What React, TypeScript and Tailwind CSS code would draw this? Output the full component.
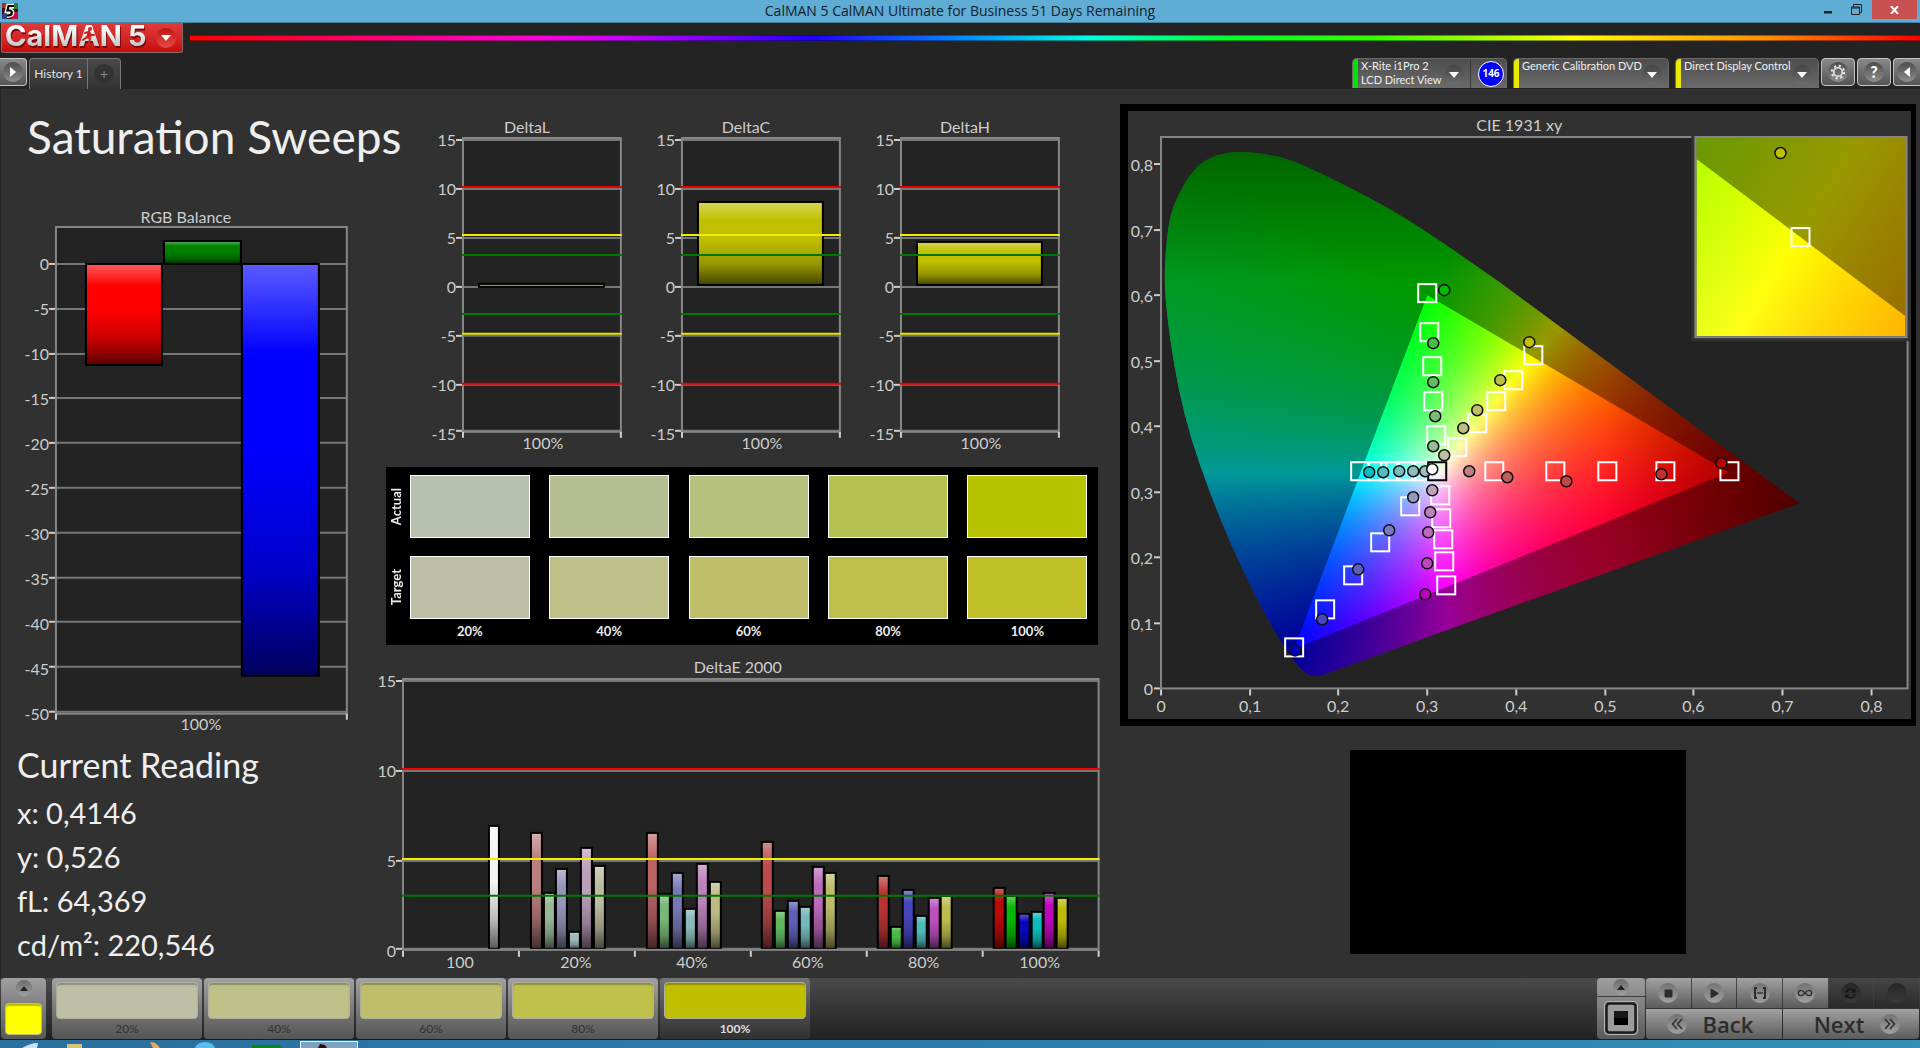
import React from "react";
import { FaPlay, FaStop, FaSyncAlt } from "react-icons/fa";
import { Infinity as InfinityIcon } from "lucide-react";

// ---------------------------------------------------------------- shared bits

const SharedDefs = () => (
  <svg className="absolute h-0 w-0" aria-hidden="true">
    <defs>
      <linearGradient id="barShade" x1="0" y1="0" x2="0" y2="1">
        <stop offset="0" stopColor="#fff" stopOpacity="0.36" />
        <stop offset="0.22" stopColor="#fff" stopOpacity="0" />
        <stop offset="0.45" stopColor="#000" stopOpacity="0" />
        <stop offset="0.75" stopColor="#000" stopOpacity="0.22" />
        <stop offset="1" stopColor="#000" stopOpacity="0.64" />
      </linearGradient>
    </defs>
  </svg>
);

interface IBar {
  x: number;
  y: number;
  w: number;
  h: number;
  color: string;
}

const Bar = ({ x, y, w, h, color }: IBar) => (
  <g>
    <rect x={x} y={y} width={w} height={h} fill={color} />
    <rect x={x} y={y} width={w} height={h} fill="url(#barShade)" stroke="#000" strokeWidth={2} />
  </g>
);

interface IText {
  x: number;
  y: number;
  anchor?: "start" | "middle" | "end";
  children: React.ReactNode;
}

const ChartText = ({ x, y, anchor = "middle", children }: IText) => (
  <text x={x} y={y + 6} textAnchor={anchor} fontSize={16} fill="#cdcdcd">
    {children}
  </text>
);

const Line = ({ x1, x2, y, color = "#767676", w = 2 }: { x1: number; x2: number; y: number; color?: string; w?: number }) => (
  <line x1={x1} x2={x2} y1={y} y2={y} stroke={color} strokeWidth={w} />
);

const Tick = ({ x, y }: { x: number; y: number }) => (
  <line x1={x} x2={x} y1={y} y2={y + 6} stroke="#cdcdcd" strokeWidth={2} />
);

// --------------------------------------------------------------------- charts

const RgbBalance = () => (
  <svg viewBox="0 0 374 534" className="block w-full" role="img" aria-label="RGB Balance">
    <ChartText x={185} y={11}>RGB Balance</ChartText>
    <rect x={55} y={21} width={291} height={487} fill="#232323" />
    {Array.from({ length: 11 }, (_, i) => (
      <g key={i}>
        <Line x1={55} x2={346} y={58 + i * 45 - Math.round(i / 5)} />
        <Line x1={48} x2={54} y={58 + i * 45 - Math.round(i / 5)} color="#cdcdcd" />
        <ChartText x={48} y={58 + i * 45} anchor="end">{i * -5}</ChartText>
      </g>
    ))}
    <rect x={55} y={21} width={291} height={487} fill="none" stroke="#868686" strokeWidth={2} />
    <Bar x={85} y={58} w={76} h={101} color="#ff0000" />
    <Bar x={163} y={35} w={77} h={23} color="#008200" />
    <Bar x={241} y={58} w={77} h={412} color="#0000ff" />
    <Tick x={55} y={508} />
    <Tick x={346} y={508} />
    <ChartText x={200} y={518}>100%</ChartText>
  </svg>
);

interface IDelta {
  title: string;
  top: number;
  height: number;
}

const DeltaChart = ({ title, top, height }: IDelta) => (
  <svg viewBox="0 0 219 340" className="block min-w-0 flex-1" role="img" aria-label={title}>
    <ChartText x={116} y={9}>{title}</ChartText>
    <rect x={52} y={20} width={158} height={294} fill="#232323" />
    {[15, 10, 5, 0, -5, -10, -15].map((v, i) => (
      <g key={v}>
        <Line x1={52} x2={210} y={i === 6 ? 313 : 22 + i * 49} />
        <Line x1={45} x2={51} y={i === 6 ? 313 : 22 + i * 49} color="#cdcdcd" />
        <ChartText x={45} y={22 + i * 49} anchor="end">{v}</ChartText>
      </g>
    ))}
    <rect x={52} y={20} width={158} height={294} fill="none" stroke="#868686" strokeWidth={2} />
    <Bar x={68} y={top} w={125} h={height} color="#c0c000" />
    <Line x1={51} x2={211} y={69} color="#e60000" />
    <Line x1={51} x2={211} y={266} color="#e60000" />
    <Line x1={51} x2={211} y={117} color="#eeee00" />
    <Line x1={51} x2={211} y={216} color="#e6e600" />
    <Line x1={51} x2={211} y={137} color="#007800" />
    <Line x1={51} x2={211} y={196} color="#007800" />
    <Tick x={52} y={314} />
    <Tick x={210} y={314} />
    <ChartText x={132} y={325}>100%</ChartText>
  </svg>
);

// Tops of the bars in chart coordinates, one row for each saturation level
const deltaE = [
  { label: "20%", tops: [177, 237, 213, 276, 192, 210], colors: ["#bb8080", "#96b896", "#9696bb", "#9fb9b9", "#bb9fbb", "#bbbb9f"] },
  { label: "40%", tops: [177, 238, 217, 253, 208, 226], colors: ["#bb6464", "#78b878", "#7878b8", "#8cb9b9", "#bb82bb", "#bbbb82"] },
  { label: "60%", tops: [186, 255, 245, 251, 211, 217], colors: ["#bb4b4b", "#5fb85f", "#5f5fb8", "#73b9b9", "#bb69bb", "#bbbb69"] },
  { label: "80%", tops: [220, 271, 234, 260, 242, 240], colors: ["#bb3434", "#46b846", "#4646bb", "#50b9b9", "#bb50bb", "#bbbb4e"] },
  { label: "100%", tops: [232, 240, 258, 256, 237, 242], colors: ["#bb0808", "#08b808", "#0808bb", "#0eb9b9", "#bb08bb", "#bbbb08"] },
];

const DeltaE2000 = () => (
  <svg viewBox="0 0 735 320" className="block w-full" role="img" aria-label="DeltaE 2000">
    <ChartText x={363} y={11}>DeltaE 2000</ChartText>
    <rect x={28} y={23} width={696} height={271} fill="#232323" />
    {[15, 10, 5, 0].map((v, i) => (
      <g key={v}>
        <Line x1={28} x2={724} y={25 + i * 90 - (i === 3 ? 2 : 0)} />
        <Line x1={21} x2={27} y={25 + i * 90 - (i === 3 ? 2 : 0)} color="#cdcdcd" />
        <ChartText x={21} y={25 + i * 90} anchor="end">{v}</ChartText>
      </g>
    ))}
    <Bar x={114} y={170} w={10} h={123} color="#f4f4f4" />
    {deltaE.map((group, g) =>
      group.tops.map((top, i) => (
        <Bar key={`${g}-${i}`} x={Math.round(156 + g * 115.7 + i * 12.6)} y={top} w={11} h={293 - top} color={group.colors[i]} />
      ))
    )}
    <rect x={28} y={23} width={696} height={271} fill="none" stroke="#868686" strokeWidth={2} />
    <Line x1={27} x2={725} y={113} color="#f00000" />
    <Line x1={27} x2={725} y={203} color="#f0f000" />
    <Line x1={27} x2={725} y={240} color="#007800" />
    {Array.from({ length: 7 }, (_, i) => (
      <Tick key={i} x={28 + i * 116} y={295} />
    ))}
    {["100", ...deltaE.map((d) => d.label)].map((label, i) => (
      <ChartText key={label} x={85 + i * 116} y={306}>{label}</ChartText>
    ))}
  </svg>
);

// ---------------------------------------------------------------- CIE diagram

const W = 746;
const H = 551;
const SX = 887;
const SY = 655;

// Chromaticity to the brightest rgb, clipped to the gamut
const xyToRgb = (x: number, y: number) => {
  const z = 1 - x - y;
  const r = Math.max(0, 3.2406 * x - 1.5372 * y - 0.4986 * z);
  const g = Math.max(0, -0.9689 * x + 1.8758 * y + 0.0415 * z);
  const b = Math.max(0, 0.0557 * x - 0.204 * y + 1.057 * z);
  const max = Math.max(r, g, b, 0.0001);
  let f = 255;
  if (x > 0.5) f *= 1 - (x - 0.5) * 2.2;
  if (y > 0.62) f *= 1 - (y - 0.62) * 1.7;
  return `rgb(${Math.round((r / max) * f)},${Math.round((g / max) * f)},${Math.round((b / max) * f)})`;
};

interface IField {
  id: string;
  width: number;
  height: number;
  x0: number;
  y0: number;
  sx: number;
  sy: number;
}

const ColorField = ({ id, width, height, x0, y0, sx, sy }: IField) => {
  const step = 2;
  const cols = Math.ceil(width / 12);
  const rows = Array.from({ length: Math.ceil(height / step) }, (_, i) => i);
  return (
    <g shapeRendering="crispEdges">
      <defs>
        {rows.map((i) => (
          <linearGradient key={i} id={`${id}${i}`}>
            {Array.from({ length: cols + 1 }, (_, c) => (
              <stop
                key={c}
                offset={c / cols}
                stopColor={xyToRgb(x0 + ((c / cols) * width) / sx, y0 - (i * step + 1) / sy)}
              />
            ))}
          </linearGradient>
        ))}
      </defs>
      {rows.map((i) => (
        <rect key={i} x={0} y={i * step} width={width} height={step} fill={`url(#${id}${i})`} />
      ))}
    </g>
  );
};

const locus = [
  [338, 145], [291, 112], [241, 79], [205, 59], [165, 39], [135, 25], [115, 19], [91, 15], [65, 15], [41, 24], [25, 43],
  [11, 71], [6, 98], [3, 139], [6, 179], [13, 228], [23, 277], [38, 326], [58, 379], [81, 432], [105, 479], [121, 506],
  [135, 526], [146, 538], [161, 538],
];

const locusPath =
  "M638 366 L338 145 " +
  locus
    .slice(1, -1)
    .map((p, i) => {
      const next = locus[i + 2];
      return `Q${p[0]} ${p[1]} ${(p[0] + next[0]) / 2} ${(p[1] + next[1]) / 2}`;
    })
    .join(" ") +
  " Q158 539 168 535 Z";

const targets = [
  [266, 156], [268, 195], [271, 229], [272, 264], [275, 298],
  [372, 218], [352, 243], [335, 264], [316, 286], [296, 310],
  [333, 334], [394, 334], [446, 334], [504, 334], [568, 334],
  [279, 358], [280, 381], [282, 402], [283, 424], [285, 448],
  [249, 369], [219, 405], [192, 438], [164, 472], [133, 510],
  [199, 334], [216, 334], [229, 334], [245, 334], [260, 334],
];

const readings: [number, number, string][] = [
  [283, 153, "#00be00"], [272, 206, "#46be46"], [272, 245, "#5fbe5f"], [274, 279, "#78be78"], [272, 309, "#96be96"],
  [368, 205, "#c0c000"], [339, 243, "#bebe46"], [316, 273, "#bebe69"], [302, 291, "#bebe82"], [283, 318, "#bebea0"],
  [308, 334, "#be8282"], [346, 340, "#be5f5f"], [405, 344, "#be4646"], [500, 337, "#be3232"], [560, 326, "#be0000"],
  [271, 353, "#bea0be"], [269, 375, "#be82be"], [267, 395, "#be69be"], [266, 426, "#be46be"], [264, 457, "#be00be"],
  [252, 360, "#9696be"], [228, 393, "#7878be"], [197, 432, "#5f5fbe"], [161, 482, "#4646be"], [134, 513, "#0000be"],
  [208, 335, "#00bebe"], [222, 335, "#50bebe"], [238, 334, "#73bebe"], [252, 334, "#8cbebe"], [264, 334, "#a0bebe"],
];

const Target = ({ x, y, color = "#fff" }: { x: number; y: number; color?: string }) => (
  <rect x={x - 9} y={y - 9} width={18} height={18} fill="none" stroke={color} strokeWidth={2} />
);

const Reading = ({ x, y, color }: { x: number; y: number; color: string }) => (
  <circle cx={x} cy={y} r={5.5} fill={color} stroke="#111" strokeWidth={1.5} />
);

const CieDiagram = () => (
  <svg viewBox="0 0 782 608" className="block w-full" role="img" aria-label="CIE 1931 xy">
    <defs>
      <clipPath id="locusClip">
        <path d={locusPath} />
      </clipPath>
      <clipPath id="insetClip">
        <rect width={209} height={198} />
      </clipPath>
    </defs>
    <ChartText x={391} y={14}>CIE 1931 xy</ChartText>
    <g transform="translate(33 26)">
      <rect width={W} height={H} fill="#232323" />
      <g clipPath="url(#locusClip)">
        <ColorField id="cie" width={648} height={H} x0={0} y0={H / SY} sx={SX} sy={SY} />
        <path fillRule="evenodd" fill="#000" fillOpacity={0.4} d={`M0 0H${W}V${H}H0Z M567.7 334.9 L266.1 158 L133 511.7Z`} />
      </g>
      <rect width={W} height={H} fill="none" stroke="#868686" strokeWidth={2} />
      {targets.map(([x, y], i) => (
        <Target key={i} x={x} y={y} />
      ))}
      <Target x={276} y={334} color="#000" />
      {readings.map(([x, y, color], i) => (
        <Reading key={i} x={x} y={y} color={color} />
      ))}
      <Reading x={271} y={332} color="#fff" />
      {/* axes */}
      {Array.from({ length: 9 }, (_, i) => (
        <g key={i}>
          <Tick x={Math.round(i * 88.7)} y={552} />
          <Line x1={-7} x2={-1} y={Math.round(551 - i * 65.5)} color="#cdcdcd" />
          <ChartText x={Math.round(i * 88.7)} y={569}>{i ? `0,${i}` : "0"}</ChartText>
          <ChartText x={-8} y={Math.round(552 - i * 65.5)} anchor="end">{i ? `0,${i}` : "0"}</ChartText>
        </g>
      ))}
      {/* close-up of the selected patch */}
      <rect x={530} y={-3} width={219} height={207} fill="#313131" />
      <g transform="translate(535 1)">
        <g clipPath="url(#insetClip)">
          <ColorField id="zoom" width={209} height={198} x0={0.3946} y0={0.5298} sx={4180} sy={3960} />
          <path d="M0 21 L209 178 V0 H0Z" fill="#000" fillOpacity={0.4} />
        </g>
        <rect x={-1} y={-1} width={211} height={200} fill="none" stroke="#868686" strokeWidth={2} />
        <Target x={104} y={99} />
        <Reading x={84} y={15} color="#c0c000" />
      </g>
    </g>
  </svg>
);

// ------------------------------------------------------------------ top chrome

const RoundGlyph = ({ children }: { children: React.ReactNode }) => (
  <span className="flex h-5 w-5 items-center justify-center rounded-full bg-linear-to-b from-[#4c4c4c] to-[#909090] text-white">
    {children}
  </span>
);

const Caret = () => (
  <svg viewBox="0 0 10 6" className="h-[6px] w-[10px]" fill="currentColor">
    <path d="M0 0h10L5 6z" />
  </svg>
);

const TitleBar = () => (
  <div className="flex h-[23px] items-start border-b border-[#44809f] bg-[#5facd5] text-[#14222c]">
    <div className="flex w-[120px] pt-[3px] pl-[2px]">
      <svg viewBox="0 0 16 16" className="h-4 w-4" aria-hidden="true">
        <rect width="16" height="16" fill="#3a1018" />
        <path d="M0 0h7v5H0z" fill="#b02a2a" />
        <path d="M9 0h7v6H9z" fill="#2c7a34" />
        <path d="M10 9h6v7h-6z" fill="#c01048" />
        <path d="M0 11h5v5H0z" fill="#2b3f8c" />
        <path d="M12 3H6.500L5.500 7.500c6-1 6 5-.5 5" fill="none" stroke="#f4f4e0" strokeWidth="5" />
        <path d="M12 3H6.500L5.500 7.500c6-1 6 5-.5 5" fill="none" stroke="#000" strokeWidth="2.200" />
      </svg>
    </div>
    <div className="flex-1 text-center font-['Open_Sans',sans-serif] text-sm leading-[22px]">
      CalMAN 5 CalMAN Ultimate for Business 51 Days Remaining
    </div>
    <div className="flex w-[120px] justify-end pr-[3px]">
      <button aria-label="Minimize" className="flex h-[19px] w-6 items-center justify-center">
        <svg viewBox="0 0 8 10" className="h-[10px] w-2"><path d="M0 6h8v2.500H0z" fill="#222" /></svg>
      </button>
      <button aria-label="Restore" className="mr-1 ml-1 flex h-[19px] w-6 items-center justify-center">
        <svg viewBox="0 0 11 11" className="h-[11px] w-[11px]" fill="none" stroke="#222">
          <path d="M2.500 2.500V.500h8v8h-2M.500 3h8v7.500h-8z" />
          <path d="M1 4h7" />
        </svg>
      </button>
      <button aria-label="Close" className="flex h-[19px] w-[45px] items-center justify-center bg-[#c75050]">
        <svg viewBox="0 0 9 8" className="h-2 w-[9px]" stroke="#fff" strokeWidth="2"><path d="M1 0l7 8M8 0L1 8" /></svg>
      </button>
    </div>
  </div>
);

const Logo = () => (
  <button className="ml-px flex h-[30px] w-[182px] items-center justify-between rounded-b-[3px] border border-t-0 border-[#8a6a6a] bg-linear-to-b from-[#e23a3a] to-[#c40a0a] pr-[6px]">
    <svg viewBox="0 0 148 29" className="h-[29px] w-[148px] overflow-visible" role="img" aria-label="CalMAN 5">
      <defs>
        <linearGradient id="logoFill" x1="0" y1="0" x2="0" y2="1">
          <stop offset="0.3" stopColor="#fff" />
          <stop offset="1" stopColor="#a8b0b0" />
        </linearGradient>
      </defs>
      <g
        fontFamily="Inter, sans-serif"
        fontWeight="700"
        fontSize="29"
        fill="url(#logoFill)"
        className="drop-shadow-[1px_2px_0_#7c0808]"
      >
        <text x="3" y="23">CalMAN</text>
        <text x="126" y="23">5</text>
      </g>
      <g stroke="#d42020" strokeWidth="2" fill="none" strokeLinecap="round">
        <circle cx="88" cy="6" r="1" fill="#d42020" />
        <path d="M83 10l4-1 2 3 3 0M87 10l-2 4 3 2-1 4M85 14l-4 3" />
      </g>
    </svg>
    <span className="flex h-5 w-5 items-center justify-center rounded-full bg-linear-to-b from-[#c01010] to-[#e84848] text-white">
      <Caret />
    </span>
  </button>
);

interface ISource {
  lines: string[];
  accent: string;
  width: string;
  badge?: string;
}

const SourceMenu = ({ lines, accent, width, badge }: ISource) => (
  <div className={`flex h-[30px] overflow-hidden rounded-t-[5px] border border-b-0 border-[#6a6a6a] bg-linear-to-b from-[#4d4d4d] to-[#6b6b6b] ${width}`}>
    <button aria-haspopup="menu" className="flex min-w-0 flex-1 items-start text-left text-[#f0f0f0]">
      <span className={`h-full w-[5px] ${accent}`} />
      <span className="flex-1 pl-[3px] text-[11px] leading-[14px] whitespace-nowrap">
        {lines.map((line) => (
          <span key={line} className="block">{line}</span>
        ))}
      </span>
      <span className="mt-[6px] mr-[6px] flex h-5 w-5 items-center justify-center rounded-full bg-linear-to-b from-[#454545] to-[#6d6d6d] text-white">
        <Caret />
      </span>
    </button>
    {badge && (
      <span className="flex w-[36px] items-center justify-end border-l border-[#3a3a3a] pr-[2px]">
        <span className="flex h-[26px] w-[26px] items-center justify-center rounded-full border border-white bg-[#0000ff] font-['Open_Sans',sans-serif] text-[10px] font-bold text-white">
          {badge}
        </span>
      </span>
    )}
  </div>
);

const SquareButton = ({ label, children }: { label: string; children: React.ReactNode }) => (
  <button aria-label={label} className="flex h-[28px] w-[34px] items-center justify-center rounded-[4px] border border-[#c4c4c4] bg-linear-to-b from-[#8a8a8a] to-[#555555]">
    <RoundGlyph>{children}</RoundGlyph>
  </button>
);

const Header = () => (
  <header className="bg-[#232323]">
    <div className="flex h-[30px] items-start gap-[7px]">
      <Logo />
      <div className="mt-3 h-[6px] flex-1 border-y border-black/40 bg-[linear-gradient(90deg,#ff0000_0%,#ff0060_9%,#ff00d8_20%,#c800ff_25%,#2000ff_36%,#0090ff_45%,#00ffe0_52%,#00ff30_60%,#30ff00_68%,#ffff00_80%,#ff9000_91%,#ff0000_100%)]" />
    </div>
    <div className="flex h-[36px] items-start justify-between pt-[5px]">
      <div className="flex">
        <button aria-label="Show workflow" className="mr-[2px] flex h-[28px] w-[27px] items-center justify-center rounded-r-[4px] border border-l-0 border-[#c4c4c4] bg-linear-to-b from-[#8a8a8a] to-[#555555]">
          <RoundGlyph>
            <svg viewBox="0 0 6 10" className="h-[10px] w-[6px]" fill="currentColor"><path d="M0 0l6 5-6 5z" /></svg>
          </RoundGlyph>
        </button>
        <div className="flex h-[31px] rounded-t-[4px] border border-b-0 border-[#777777] bg-linear-to-b from-[#4a4a4a] to-[#333333]">
          <button className="w-[58px] border-r border-[#777777] text-xs text-[#e6e6e6]">History 1</button>
          <button aria-label="Add history" className="flex w-[32px] items-center justify-center">
            <span className="flex h-5 w-5 items-center justify-center rounded-full bg-[#333333] text-sm leading-none text-[#8a8a8a]">+</span>
          </button>
        </div>
      </div>
      <div className="flex items-start">
        <div className="mr-[2px] flex gap-[6px]">
          <SourceMenu width="w-[155px]" accent="bg-[#00e400]" lines={["X-Rite i1Pro 2", "LCD Direct View"]} badge="146" />
          <SourceMenu width="w-[156px]" accent="bg-[#eaea00]" lines={["Generic Calibration DVD"]} />
          <SourceMenu width="w-[144px]" accent="bg-[#eaea00]" lines={["Direct Display Control"]} />
        </div>
        <div className="flex gap-[2px]">
          <SquareButton label="Settings">
            <svg viewBox="0 0 16 16" className="h-4 w-4" fill="none" stroke="#e8e8e8">
              <circle cx="8" cy="8" r="4.300" strokeWidth="1.600" />
              <circle cx="8" cy="8" r="6.200" strokeWidth="2" strokeDasharray="2.200 2.670" />
            </svg>
          </SquareButton>
          <SquareButton label="Help">
            <span className="text-base leading-none font-black">?</span>
          </SquareButton>
          <button aria-label="Show panel" className="flex h-[28px] w-[27px] items-center justify-center rounded-l-[4px] border border-r-0 border-[#c4c4c4] bg-linear-to-b from-[#8a8a8a] to-[#555555]">
            <RoundGlyph>
              <svg viewBox="0 0 6 10" className="h-[10px] w-[6px]" fill="currentColor"><path d="M6 0L0 5l6 5z" /></svg>
            </RoundGlyph>
          </button>
        </div>
      </div>
    </div>
  </header>
);

// -------------------------------------------------------------------- swatches

const swatches = [
  { label: "20%", actual: "bg-[#b6c0ad]", target: "bg-[#bfbfa5]" },
  { label: "40%", actual: "bg-[#b6bf91]", target: "bg-[#bfbf88]" },
  { label: "60%", actual: "bg-[#b5c17c]", target: "bg-[#bfbf6b]" },
  { label: "80%", actual: "bg-[#b5c153]", target: "bg-[#bfbf4b]" },
  { label: "100%", actual: "bg-[#b7c200]", target: "bg-[#c1bf2a]" },
];

const SwatchPanel = () => (
  <div className="mx-[11px] mt-[9px] flex h-[178px] bg-black pt-2 pr-[11px] text-[#ececec]">
    <div className="flex w-6 flex-col gap-[18px]">
      {["Actual", "Target"].map((label) => (
        <div key={label} className="flex h-[63px] items-center justify-center pr-1 text-[13px] leading-5 font-bold">
          <span className="rotate-180 [writing-mode:vertical-rl]">{label}</span>
        </div>
      ))}
    </div>
    <div className="flex flex-1 justify-between">
      {swatches.map((s) => (
        <div key={s.label} className="flex w-[120px] flex-col">
          <div className={`h-[63px] border border-white ${s.actual}`} />
          <div className={`mt-[18px] h-[63px] border border-white ${s.target}`} />
          <div className="text-center text-[13px] leading-6 font-bold">{s.label}</div>
        </div>
      ))}
    </div>
  </div>
);

// ------------------------------------------------------------------ bottom bar

const levels = [
  { label: "20%", color: "bg-[#bfbfa5]" },
  { label: "40%", color: "bg-[#bfbf88]" },
  { label: "60%", color: "bg-[#bfbf6b]" },
  { label: "80%", color: "bg-[#bfbf4b]" },
  { label: "100%", color: "bg-[#bfbf00]" },
];

const BTN = "flex items-center justify-center bg-linear-to-b from-[#a2a2a2] to-[#5c5c5c]";
const DARK_BTN = "flex items-center justify-center bg-linear-to-b from-[#464646] to-[#2a2a2a]";
const DISC = "flex h-5 w-5 items-center justify-center rounded-full bg-linear-to-b from-[#737373] to-[#a0a0a0] text-[#2c2c2c]";
const DARK_DISC = "flex h-5 w-5 items-center justify-center rounded-full bg-linear-to-b from-[#262626] to-[#3a3a3a] text-[#161616]";

const Chevrons = ({ flip = false }: { flip?: boolean }) => (
  <svg viewBox="0 0 12 12" className={`h-3 w-3 ${flip ? "rotate-180" : ""}`} fill="none" stroke="currentColor" strokeWidth="1.500">
    <path d="M6 1L1.500 6 6 11M11 1L6.500 6 11 11" />
  </svg>
);

const UpArrow = () => (
  <svg viewBox="0 0 10 6" className="h-[5px] w-2" fill="currentColor"><path d="M5 0l5 6H0z" /></svg>
);

const BottomBar = () => (
  <footer className="flex h-[62px] justify-between border-b border-[#1c1c1c] bg-linear-to-b from-[#4a4a4a] to-[#222222]">
    <div className="flex gap-[2px] pl-px">
      <button aria-label="Pattern color" className="mr-1 flex w-[45px] flex-col items-center rounded-[4px] bg-linear-to-b from-[#a0a0a0] to-[#585858] pt-[2px]">
        <span className="flex h-4 w-4 items-center justify-center rounded-full bg-linear-to-b from-[#6a6a6a] to-[#a0a0a0] text-[#222]">
          <UpArrow />
        </span>
        <span className="mt-[7px] h-[32px] w-[37px] rounded-[4px] border border-[#bdbd78] bg-[#ffff00] shadow-[inset_0_2px_1px_rgba(0,0,0,0.25)]" />
      </button>
      {levels.map((level, i) => (
        <button
          key={level.label}
          className={`flex w-[150px] flex-col items-center rounded-[4px] bg-linear-to-b pt-1 text-xs ${
            i === 4 ? "from-[#747474] to-[#303030] font-bold text-[#dedede]" : "from-[#a2a2a2] to-[#555555] text-[#333333]"
          }`}
        >
          <span className={`h-[38px] w-[142px] rounded-[4px] border border-[#b0b0a0] shadow-[inset_0_2px_1px_rgba(0,0,0,0.25)] ${level.color}`} />
          <span className="leading-[20px]">{level.label}</span>
        </button>
      ))}
    </div>
    <div className="flex gap-px pr-px">
      <div className="flex w-[48px] flex-col gap-px">
        <button aria-label="Expand" className="flex h-[18px] items-center justify-center rounded-t-[4px] bg-linear-to-b from-[#9e9e9e] to-[#8c8c8c]">
          <span className="flex h-4 w-4 items-center justify-center rounded-full bg-linear-to-b from-[#6a6a6a] to-[#a0a0a0] text-[#222]">
            <UpArrow />
          </span>
        </button>
        <button aria-label="Stop pattern" className="flex flex-1 items-center justify-center rounded-b-[4px] bg-linear-to-b from-[#8a8a8a] to-[#5a5a5a]">
          <svg viewBox="0 0 34 34" className="h-[34px] w-[34px]">
            <rect x="0.500" y="0.500" width="33" height="33" rx="3.500" fill="#6e6e6e" stroke="#b8b8b8" />
            <rect x="2.500" y="2.500" width="29" height="29" rx="3" fill="#9c9c9c" stroke="#1c1c1c" strokeWidth="2.500" />
            <path d="M10 10h14v7H10z" fill="#181818" />
            <path d="M10 17h14v7H10z" fill="#000" />
          </svg>
        </button>
      </div>
      <div className="flex w-[273px] flex-col gap-px">
        <div className="grid h-[30px] grid-cols-6 gap-px">
          <button aria-label="Stop" className={`rounded-tl-[4px] ${BTN}`}><span className={DISC}><FaStop size={9} /></span></button>
          <button aria-label="Read" className={BTN}><span className={`pl-[2px] ${DISC}`}><FaPlay size={9} /></span></button>
          <button aria-label="Read series" className={BTN}>
            <span className={DISC}>
              <svg viewBox="0 0 14 12" className="h-3 w-[14px]" fill="none" stroke="currentColor" strokeWidth="2">
                <path d="M4 1H2v10h2M10 1h2v10h-2M4.500 6h1.300M6.500 6h1.200M8.500 6h1.200" />
              </svg>
            </span>
          </button>
          <button aria-label="Read continuously" className={BTN}><span className={DISC}><InfinityIcon size={16} strokeWidth={2} /></span></button>
          <button aria-label="Repeat" disabled className={DARK_BTN}><span className={DARK_DISC}><FaSyncAlt size={11} /></span></button>
          <button aria-label="Record" disabled className={`rounded-tr-[4px] ${DARK_BTN}`}><span className={DARK_DISC} /></button>
        </div>
        <div className="grid flex-1 grid-cols-2 gap-px font-['Open_Sans',sans-serif] text-[22px] leading-[30px] font-semibold text-[#2c2c2c]">
          <button className={`gap-4 rounded-bl-[4px] pr-2 ${BTN}`}>
            <span className={DISC}><Chevrons /></span>
            Back
          </button>
          <button className={`gap-4 rounded-br-[4px] pl-3 ${BTN}`}>
            Next
            <span className={DISC}><Chevrons flip /></span>
          </button>
        </div>
      </div>
    </div>
  </footer>
);

const Taskbar = () => (
  <div className="h-2 overflow-hidden bg-linear-to-r from-[#2b6f9e] via-[#2d7cab] to-[#338fb5]">
    <svg viewBox="0 0 400 8" className="block h-2 w-[400px]">
      <path d="M22 8c5-3 10-5 16-5l-1 5z" fill="#c8e4f0" />
      <path d="M67 8V4h15v4z" fill="#d9c27c" />
      <path d="M150 2c5 0 8 3 10 6h-7z" fill="#f0a858" />
      <ellipse cx="205" cy="9" rx="10" ry="7" fill="#58bdf0" />
      <rect x="252" y="5" width="30" height="3" fill="#088a10" />
      <rect x="300.500" y="1.500" width="57" height="8" fill="#7ba3c0" stroke="#e8f2f8" />
      <path d="M318 8l2-4 5 1 2 3z" fill="#2a0c0c" />
    </svg>
  </div>
);

// ------------------------------------------------------------------------ page

const currentReading = ["x: 0,4146", "y: 0,526", "fL: 64,369", "cd/m²: 220,546"];

export default function App() {
  return (
    <div className="flex min-h-screen flex-col bg-[#313131] font-['Lato',sans-serif] text-[#eeeeee]">
      <SharedDefs />
      <TitleBar />
      <Header />

      <main className="grid flex-1 grid-cols-[minmax(0,374fr)_minmax(0,735fr)_minmax(0,811fr)] border-l border-[#232323]">
        <section>
          <h1 className="pt-[18px] pl-[26px] text-[46px] leading-[60px] whitespace-nowrap">Saturation Sweeps</h1>
          <div className="mt-[39px]">
            <RgbBalance />
          </div>
          <div className="pl-4">
            <h2 className="mt-[3px] mb-1 text-[34px] leading-[44px]">Current Reading</h2>
            {currentReading.map((line) => (
              <p key={line} className="text-[29px] leading-[44px]">{line}</p>
            ))}
          </div>
        </section>

        <section>
          <div className="mt-[29px] flex pr-[42px] pl-9">
            <DeltaChart title="DeltaL" top={166} height={3} />
            <DeltaChart title="DeltaC" top={84} height={83} />
            <DeltaChart title="DeltaH" top={124} height={43} />
          </div>
          <SwatchPanel />
          <div className="mt-[11px]">
            <DeltaE2000 />
          </div>
        </section>

        <section className="pr-1 pl-[11px]">
          <div className="mt-[15px] border-y-[7px] border-r-[5px] border-l-8 border-black">
            <CieDiagram />
          </div>
          <div className="mx-auto mt-6 h-[204px] w-[336px] bg-black" />
        </section>
      </main>

      <BottomBar />
      <Taskbar />
    </div>
  );
}
